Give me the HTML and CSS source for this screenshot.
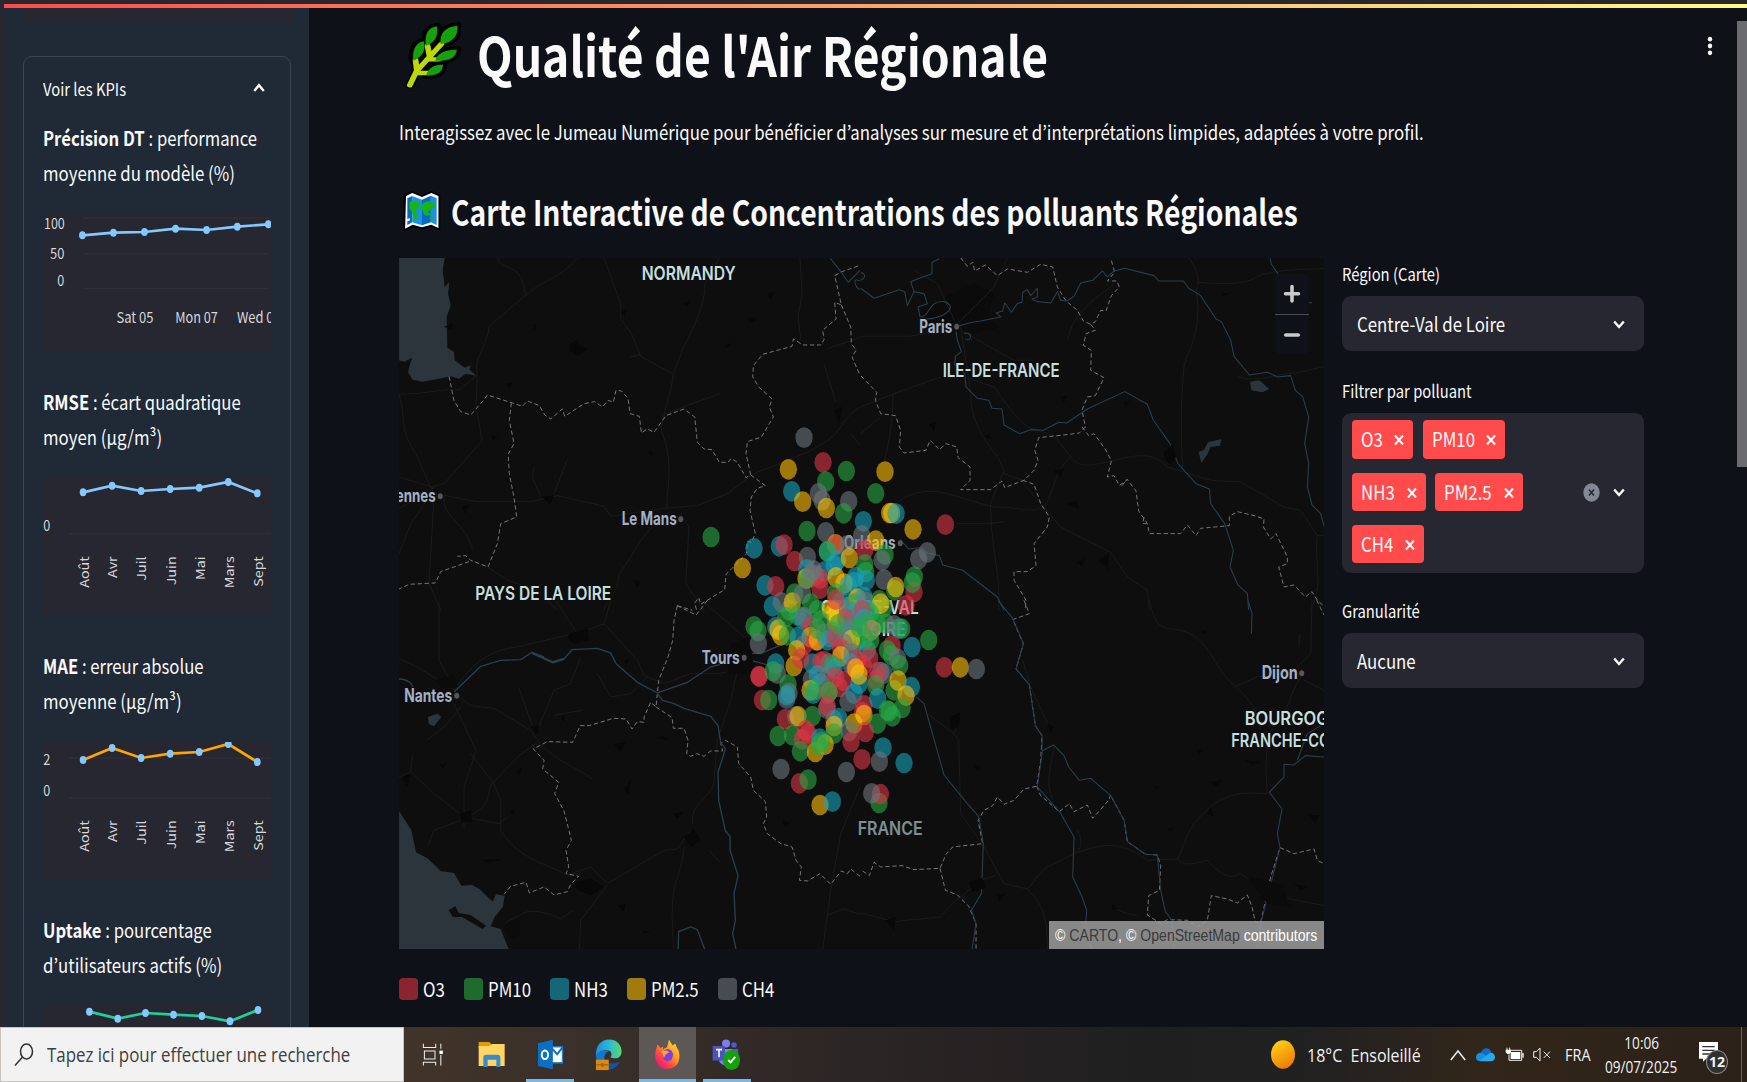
FILE: index.html
```html
<!DOCTYPE html>
<html lang="fr">
<head>
<meta charset="utf-8">
<title>Qualité de l'Air Régionale</title>
<link rel="stylesheet" href="styles.css">
</head>
<body>
<div class="screen">
  <div class="topbar"></div>
  <div class="app">
    <aside class="sidebar">
      <div class="previous-card"></div>
      <section class="expander">
        <header class="expander-head">
          <span class="sq label">Voir les KPIs</span>
          <svg class="chev" viewBox="0 0 14 12"><path d="M2.2 9 7 3.2 11.800 9"/></svg>
        </header>

        <div class="kpi">
          <p><span class="sq"><b>Précision DT</b> : performance</span><br><span class="sq">moyenne du modèle (%)</span></p>
          <svg class="chart" viewBox="130 642 683 414" preserveAspectRatio="none">
            <path class="axis" d="M250 654H807M250 761H807M250 865H807"/>
            <polyline class="line blue" points="248,706 341,698 434,696 527,686 620,690 712,680 805,673"/>
            <g class="pt"><ellipse cx="248" cy="706"/><ellipse cx="341" cy="698"/><ellipse cx="434" cy="696"/><ellipse cx="527" cy="686"/><ellipse cx="620" cy="690"/><ellipse cx="712" cy="680"/><ellipse cx="805" cy="673"/></g>
            <text x="133" y="687" textLength="62" lengthAdjust="spacingAndGlyphs">100</text>
            <text x="151" y="778" textLength="43" lengthAdjust="spacingAndGlyphs">50</text>
            <text x="173" y="857" textLength="21" lengthAdjust="spacingAndGlyphs">0</text>
            <text x="350" y="970" textLength="111" lengthAdjust="spacingAndGlyphs">Sat 05</text>
            <text x="526" y="970" textLength="128" lengthAdjust="spacingAndGlyphs">Mon 07</text>
            <text x="711" y="970" textLength="131" lengthAdjust="spacingAndGlyphs">Wed 09</text>
          </svg>
        </div>

        <div class="kpi">
          <p><span class="sq"><b>RMSE</b> : écart quadratique</span><br><span class="sq">moyen (µg/m³)</span></p>
          <svg class="chart" viewBox="130 354 683 414" preserveAspectRatio="none">
            <path class="axis" d="M208 521H813"/>
            <polyline class="line blue" points="250,397 337,377 424,393 511,387 598,383 685,366 772,400"/>
            <g class="pt"><ellipse cx="250" cy="397"/><ellipse cx="337" cy="377"/><ellipse cx="424" cy="393"/><ellipse cx="511" cy="387"/><ellipse cx="598" cy="383"/><ellipse cx="685" cy="366"/><ellipse cx="772" cy="400"/></g>
            <text x="131" y="514" textLength="21" lengthAdjust="spacingAndGlyphs">0</text>
            <g class="months" transform="translate(0,589)">
              <text transform="translate(267,0) scale(.85,1) rotate(-90)">Août</text><text transform="translate(353,0) scale(.85,1) rotate(-90)">Avr</text><text transform="translate(440,0) scale(.85,1) rotate(-90)">Juil</text><text transform="translate(527,0) scale(.85,1) rotate(-90)">Juin</text><text transform="translate(614,0) scale(.85,1) rotate(-90)">Mai</text><text transform="translate(701,0) scale(.85,1) rotate(-90)">Mars</text><text transform="translate(788,0) scale(.85,1) rotate(-90)">Sept</text>
            </g>
          </svg>
        </div>

        <div class="kpi">
          <p><span class="sq"><b>MAE</b> : erreur absolue</span><br><span class="sq">moyenne (µg/m³)</span></p>
          <svg class="chart" viewBox="130 157 683 414" preserveAspectRatio="none">
            <path class="axis" d="M208 205H813M208 325H813"/>
            <polyline class="line orange" points="250,211 337,175 424,205 511,192 598,187 685,163 772,217"/>
            <g class="pt"><ellipse cx="250" cy="211"/><ellipse cx="337" cy="175"/><ellipse cx="424" cy="205"/><ellipse cx="511" cy="192"/><ellipse cx="598" cy="187"/><ellipse cx="685" cy="163"/><ellipse cx="772" cy="217"/></g>
            <text x="131" y="225" textLength="21" lengthAdjust="spacingAndGlyphs">2</text>
            <text x="131" y="318" textLength="21" lengthAdjust="spacingAndGlyphs">0</text>
            <g class="months" transform="translate(0,392)">
              <text transform="translate(267,0) scale(.85,1) rotate(-90)">Août</text><text transform="translate(353,0) scale(.85,1) rotate(-90)">Avr</text><text transform="translate(440,0) scale(.85,1) rotate(-90)">Juil</text><text transform="translate(527,0) scale(.85,1) rotate(-90)">Juin</text><text transform="translate(614,0) scale(.85,1) rotate(-90)">Mai</text><text transform="translate(701,0) scale(.85,1) rotate(-90)">Mars</text><text transform="translate(788,0) scale(.85,1) rotate(-90)">Sept</text>
            </g>
          </svg>
        </div>

        <div class="kpi">
          <p><span class="sq"><b>Uptake</b> : pourcentage</span><br><span class="sq">d’utilisateurs actifs (%)</span></p>
          <svg class="chart" viewBox="130 947 683 414" preserveAspectRatio="none">
            <polyline class="line green" points="269,964 354,985 437,968 521,973 606,977 690,993 774,959"/>
            <g class="pt"><ellipse cx="269" cy="964"/><ellipse cx="354" cy="985"/><ellipse cx="437" cy="968"/><ellipse cx="521" cy="973"/><ellipse cx="606" cy="977"/><ellipse cx="690" cy="993"/><ellipse cx="774" cy="959"/></g>
          </svg>
        </div>
      </section>
    </aside>

    <main class="main">
      <h1>
        <svg class="leaf" viewBox="0 0 128 210" preserveAspectRatio="none">
          <g stroke="#000" stroke-width="20" stroke-linejoin="round" stroke-linecap="round" fill="#16a00c">
            <path d="M49 72C46 36 54 16 74 13C77 38 73 60 49 72ZM82 66C80 34 92 14 120 11C122 38 112 62 82 66ZM21 116C18 84 26 62 45 58C48 84 44 104 21 116ZM70 116C76 92 92 82 119 83C116 106 104 118 70 116ZM50 158C56 134 72 127 88 128C86 152 72 162 50 160Z"/>
            <path fill="none" d="M13 190 28 148 84 66M28 148 26 118M56 106 54 72"/>
          </g>
          <path fill="none" stroke="#bad80a" stroke-width="13" stroke-linecap="round" stroke-linejoin="round" d="M13 190 28 148 84 66M29 148 26 114M58 106 53 72M52 112H78M28 153H56"/>
          <path fill="#16a00c" d="M49 72C46 36 54 16 74 13C77 38 73 60 49 72ZM82 66C80 34 92 14 120 11C122 38 112 62 82 66ZM21 116C18 84 26 62 45 58C48 84 44 104 21 116ZM70 116C76 92 92 82 119 83C116 106 104 118 70 116ZM50 158C56 134 72 127 88 128C86 152 72 162 50 160Z"/>
        </svg>
        <span class="sq">Qualité de l'Air Régionale</span>
      </h1>
      <p class="intro"><span class="sq">Interagissez avec le Jumeau Numérique pour bénéficier d’analyses sur mesure et d’interprétations limpides, adaptées à votre profil.</span></p>
      <h2>
        <svg class="mapicon" viewBox="0 0 90 126" preserveAspectRatio="none">
          <path fill="#000" d="M4 16 22 4 45 16 66 3 86 14V122L66 110 45 118 24 110 3 124Z"/>
          <path fill="#fff" d="M9 18 23 9 45 21 66 9 82 18V114L66 104 45 112 24 104 7 116Z"/>
          <path fill="#0669c4" d="M12 25 23 18V97L12 105ZM45 29 65 17V97L45 106Z"/>
          <path fill="#1b8fea" d="M23 18 45 29V106L23 97ZM65 17 78 25V105L65 97Z"/>
          <path fill="#16b616" d="M17 36 26 31 40 37 38 50 30 62 36 72 34 86 27 88 26 74 17 56ZM48 38 62 32 66 40V60L60 62 58 78 50 74 46 60 40 58ZM66 34 75 42 72 54 66 58ZM59 70H64V76H59ZM62 80H70V86H62Z"/>
          <path fill="#fff" d="M11 88 18 84 17 92 11 94Z"/>
        </svg>
        <span class="sq">Carte Interactive de Concentrations des polluants Régionales</span>
      </h2>

      <div class="columns">
        <div class="map-col">
          <div class="map">
            <svg class="map-svg" viewBox="398.300 257.700 925.500 691.300">
              <g transform="translate(390,250) scale(.33333)">
                <path class="water" d="M25 23H162L156 60 162 110 176 95 172 130 180 165 168 200 170 292 190 305 192 330 222 352 240 345 236 358 257 376 225 370 205 385 180 378 140 386 95 394 66 388 52 366 56 348 64 322 42 334 25 330Z"/>
                <path class="road" d="M320 23C330 60 370 40 392 84L406 134M560 23C500 90 470 80 406 134 350 180 330 200 296 226 290 280 260 310 258 350 262 430 250 460 262 500L274 572M25 432C120 430 150 415 205 418L257 376M640 23 690 160V205L722 250 750 318 848 372 875 300 905 240C930 180 944 140 942 104L985 23M848 372C840 440 820 470 812 540 850 640 830 700 828 770M25 430C50 530 20 520 80 620L120 712M274 572 160 700 120 712M160 735 260 754H420L500 736 640 768 660 798 820 774 920 766 1010 730 1090 670 1250 606C1380 540 1330 520 1408 470M430 650 425 680 448 735M530 628 490 730M25 775 60 755 130 712 25 680M160 735C150 800 230 820 245 900M120 735 60 820 25 910M130 735 115 1000 150 1080M870 790 895 830 885 1000 940 1080M830 790C740 860 740 900 685 970 680 1040 650 1040 640 1080M1228 23 1234 130 1222 200 1230 268M1300 340 1335 455M820 494 890 465 990 430M716 320 748 314M1310 295 1408 262M1380 550 1408 585M290 950 350 990 440 1020 500 1080"/>
                <path class="border" d="M175 378 190 452 210 484 240 494 280 448 290 434 365 458 395 468 410 452 446 466 462 494 480 506 515 476 522 498 580 460 612 454 635 470 652 450 668 456 676 420 692 422 712 444 718 490 746 498 752 548 770 536 790 546 826 496 880 476 912 500 920 576 940 596 964 598 986 636H1012L1022 624 1040 636 1066 682 1080 674 1124 706 1100 714 1082 740 1078 780 1094 850 1082 876 1070 874 1068 910 1006 972 1002 1018 930 1062 924 1042 912 1058 918 1080M860 1066 905 1080M362 458 356 510 370 580 352 612 356 670 370 742 378 800 330 820 320 880 292 950 240 930 224 916 200 918M235 934 150 964 134 998 56 1002 25 1016M1080 674 1066 610 1070 574 1112 560 1148 500 1136 470 1144 446 1104 410 1086 380 1088 346 1116 312 1204 288 1208 266 1236 284H1290L1300 268 1296 240 1336 206 1332 156 1352 164 1332 76 1354 64 1408 45M1352 164 1380 230 1382 280 1396 300 1384 320 1408 375"/>
                <path class="river" d="M1318 23 1352 66 1372 96 1408 60M1408 92C1380 80 1396 112 1408 118"/>
                <path class="patch" d="M540 280 560 268 572 292 592 294 562 318 536 300ZM160 230 186 218 184 236ZM690 186 708 176 702 196ZM1074 202 1096 210 1080 218ZM345 400 366 396 356 414ZM300 552 320 560 308 572ZM455 740 488 735 480 765ZM725 990 750 992 742 1012ZM880 160 900 152 890 166ZM1330 478 1354 470 1345 520ZM215 768 236 762 222 790ZM425 225 438 222 432 240ZM1130 130 1150 124 1140 144ZM776 600 792 610 780 620ZM1000 285 1026 278 1010 292Z"/>
              </g>
              <g transform="translate(860,250) scale(.33333)">
                <path class="patch faint" d="M230 150 340 100 400 130 380 200 420 230 340 250 230 230 170 200Z"/>
                <path class="road" d="M0 258H150L280 230 400 110 440 23M290 230 230 100 160 60M300 230 330 430C330 560 420 600 430 670L486 690M300 240 370 280 460 330H520M310 380 400 410 450 480 500 530 580 556 630 620C660 660 700 640 750 634 860 600 890 620 920 650L1050 690 1140 695 1270 770 1320 780 1370 856H1390M430 660 390 760C390 900 420 960 414 1080M480 690 600 830 750 906 800 980 860 1020 866 1080M630 620C580 660 580 730 550 770 510 790 480 770 400 770 280 740 260 720 190 724 140 730 120 750 90 770M985 23C1010 60 1020 90 1006 120 1030 250 970 320 970 350 960 450 960 560 966 650M1010 96C1120 104 1160 100 1200 74 1300 50 1350 60 1390 54M1130 380C1200 400 1260 366 1300 368 1350 360 1370 352 1390 350M0 470 100 430 240 380M96 430C100 500 80 600 72 630M0 550 60 500M290 820H380L432 814M1370 860C1360 940 1390 1000 1350 1080M620 270C640 180 700 150 760 100"/>
                <path class="border" d="M300 23 320 48 336 36 342 62 374 44 410 76 440 56 500 66 540 42 576 50 590 110 616 152 650 180 668 212 690 222 704 214 720 180 736 182 752 136 776 110 768 92 740 92 762 66 750 23M690 222 704 240 676 250 668 285 692 300 690 360 730 382 704 436 680 440 664 480 674 530 656 548 610 554 534 562 522 600 532 630 520 660 490 690 432 712 424 692 390 718 300 718 328 690V650L292 622 288 590 256 580 236 598 208 570 196 600 130 608 116 590 120 540 104 496 60 490 44 450 48 426 0 376M664 530 684 556 700 550 736 600 752 632 740 680 760 676 776 706 800 688 826 722 834 782 860 820 866 850H960L980 824 1006 856 1020 834 1106 826V798L1130 784 1180 796 1210 806 1208 830 1230 866 1246 850 1280 920V940L1254 950 1270 1010 1300 1004 1334 1040 1354 1024 1370 1050 1390 1068M486 690 520 702 540 760 566 800 560 830 520 880 526 946 500 964H460V990L496 1050 494 1080M784 706 800 686M850 800 846 820 868 820"/>
                <path class="river" d="M0 114 40 144 116 118 132 124 140 166 160 124 190 130 200 160 172 170 178 200C210 200 200 150 250 154 300 170 240 210 190 206M235 26 214 36V70L176 84 150 94 160 124M0 90C20 80 10 66 0 68M286 230C320 220 330 214 360 212L420 200 406 188 426 182 432 158 452 186 470 160 484 156 486 126 500 118 510 136 530 114V140L514 146 530 154 570 158 590 124 600 150 618 152 640 138 660 98 696 90 726 62 740 80 760 62 792 54 880 76 894 92 968 92 984 114 1020 136 1066 206 1082 214 1110 270 1120 318 1166 374 1220 366 1250 380 1290 376 1304 420 1326 440 1344 500 1332 580 1344 640 1340 710 1354 764 1380 790 1390 828M286 244 290 270 302 304 284 318 282 344 312 370 316 410 350 444 384 450 394 474 424 476 430 524 476 550 510 538 548 540 594 516 618 518 680 476 792 424 860 462 878 510 928 580 952 640 1006 700 1046 716 1050 760 1092 820 1118 900 1108 950 1132 1004 1160 1030 1164 1080M310 250C340 240 330 280 314 266M1228 24 1232 42 1252 70M1345 157H1354M118 868 144 896 180 892 200 908 236 916 246 944 306 960 410 1040 430 1080"/>
                <path class="water" d="M1168 394 1196 390 1226 416 1205 426 1172 420ZM1014 606 1030 598 1042 576 1082 566 1078 586 1050 590 1040 612 1022 638Z"/>
                <path class="patch" d="M910 606 936 580 946 620 930 644 912 626ZM580 660 610 656 600 680ZM620 760 650 750 655 775ZM650 935 672 925 665 950ZM600 440 620 435 610 456ZM715 930 745 905 742 960ZM370 560 385 550 395 566ZM1080 130 1115 126 1090 136ZM790 455 806 452 796 472ZM205 520 225 515 220 545Z"/>
              </g>
              <g transform="translate(390,600) scale(.33333)">
                <path class="water" d="M25 632 62 690 76 756 110 774 150 812 190 818 212 856 244 854 266 866 306 904 316 882 342 886 336 920 312 950 300 978 330 986 354 1047H25ZM112 350 140 340 152 350 130 378 114 370Z"/>
                <path class="land" d="M174 930 194 918 204 938 240 944 286 976 276 986 214 950 186 950Z"/>
                <path class="road" d="M145 0V180L190 260M25 175 80 200 190 270M190 270C250 180 300 150 380 140L540 102M495 0 560 100 640 70 660 0M640 70 740 180 760 225 820 250 900 220 980 220 1080 205M205 290 240 316 310 324 420 390 434 410C480 480 560 500 604 536M385 265 430 390M190 310 256 450 220 560V680M240 460 310 550 330 600V690C380 770 440 780 530 824M434 430 380 470 300 555C290 600 290 620 230 650M25 530 60 515 130 580 220 650 325 670 350 650M60 515 66 465M110 740 130 690 210 660M530 824 600 800 650 850 820 750 860 746 900 690M650 855 570 960 566 1047M880 740C870 850 830 830 850 1047M905 670C900 600 970 590 970 540L980 420 1020 300 1040 210M570 170 540 250 490 270 440 390M620 220 660 290 720 280 770 230M345 966 410 934C460 930 500 950 510 955L548 930M110 420 170 370 210 320M490 345 575 330M1408 560 1350 700 1320 870 1296 1047M1310 944 1360 926 1408 942M935 0 1060 110 1120 110M955 750 986 784"/>
                <path class="border" d="M860 16 888 30 916 44 926 32 950 0M860 16 850 60 846 120 832 170 804 240 796 320 780 306 760 350V366L740 364 724 386 706 356 668 354 596 376 568 376 556 404 546 426 470 424 428 446 460 480 456 506 504 546 492 580 520 632 532 680 542 720 526 750 534 800 526 820 564 828 540 852 530 874 490 884 460 860 416 878 406 846 360 858 340 882M796 320 844 352 848 384 880 384 892 420 888 460 900 468 918 460 940 468 960 452H996L990 430 1004 420 1040 440 1044 490 1080 530 1088 570 1124 604 1128 650 1118 670 1130 700 1170 730 1204 740 1216 780 1232 800 1226 840 1250 842 1288 820 1320 852 1352 812 1370 820 1380 806 1408 828"/>
                <path class="river thick" d="M190 275 220 246 270 198 330 180 390 178 424 156 460 170"/>
                <path class="river widest" d="M424 158 486 186 520 176"/>
                <path class="river thick" d="M520 176 544 148 620 144 660 158 676 190 740 246 800 278 890 246 960 200 1060 174M1060 158 1110 160 1166 136M800 280 816 300 850 310 880 324 960 348 982 376 990 426 1004 446 982 516 984 600 1004 692 1018 708 1018 750 1042 826 1030 880 1034 960 1026 1000 1036 1047M25 236C50 236 66 250 68 268M862 1047 864 994 900 980 920 988 942 1047M1070 178 1140 196"/>
                <path class="patch" d="M535 100 590 85 596 120 550 130 530 115ZM205 640 240 630 245 665 215 665ZM420 378 445 375 440 405ZM880 710 910 685 930 720 900 740ZM550 845 600 835 640 860 600 885 560 870ZM670 430 704 425 690 458ZM35 530 60 520 50 560ZM700 570 722 535 712 580ZM680 915 705 910 700 935ZM270 778 330 776 300 788ZM510 350 520 345 525 370ZM845 640 880 635 860 655ZM1175 660 1200 668 1180 675ZM755 990 778 996 762 1000ZM375 510 395 505 385 525ZM358 630 375 628 366 645ZM790 412 815 405 830 420ZM700 180 715 178 705 196ZM145 490 168 490 156 505Z"/>
                <path class="patch faint" d="M130 240 190 225 200 260 160 268ZM340 980 390 950 385 1010 360 1015ZM1020 130 1080 110 1090 220 1010 220Z"/>
              </g>
              <g transform="translate(860,600) scale(.33333)">
                <path class="road" d="M866 0C880 60 890 86 940 86 1040 100 1050 180 1090 220 1110 260 1190 290 1200 390M1120 260 1190 230 1300 210 1350 160 1354 0M1318 100 1314 140M1330 240 1390 270M1320 230C1280 290 1290 330 1240 380 1220 400 1210 480 1220 580 1100 570 1060 600 1000 670 970 720 970 740 950 776L860 780C790 730 750 720 640 760L560 800C520 830 520 850 500 866L430 850 370 740 300 640 294 420 280 400 200 340M500 866C550 920 560 950 560 1047M0 938 100 964 240 950C280 900 290 900 360 840L404 826M950 776C970 800 1000 790 1040 780 1080 820 1100 840 1140 820L1240 886 1390 916M486 180 510 260 570 390M580 440C560 540 560 560 576 600M650 690C670 730 660 750 640 755M750 920 800 940 830 945M280 400 300 340"/>
                <path class="border" d="M490 0 506 40 456 58 488 130 466 206 506 254 524 376 544 406 540 480 528 558 490 566 460 600 430 612 410 590 396 616 370 630 352 660 366 730 276 740 256 762 238 804 160 808 124 796 60 800 40 786 26 826 0 808M238 804 254 870 290 884 324 918 346 970V1047M528 558 540 586 596 634 626 610 640 634 680 614 696 654 744 600 750 584 790 660 800 724 854 762 890 764 900 796 896 870 864 886 860 944 900 970 920 958 980 960 1010 980 1040 960 1052 886 1100 896 1130 908 1160 884 1174 920 1184 966H1200L1230 830 1258 742 1300 760 1360 746 1370 780 1390 790M1368 0 1390 44"/>
                <path class="river" d="M412 0 456 54 488 130 466 206 506 254 524 376 544 406V460L530 560 598 636 640 710 636 830 664 890 678 930 674 990 692 1047M544 452 578 434 610 466 624 500 656 540 690 534 750 586 790 660 800 724 854 762 890 764 900 870 914 934 934 960 940 1040M166 290 190 310 250 524 320 610 354 648 368 730 362 880 332 930 346 970 334 1047M1162 0 1174 40 1172 100M1390 470 1334 466 1300 494 1270 492V530L1226 576 1264 626 1250 700 1258 742 1200 970 1190 1040M1310 480 1340 400 1390 370"/>
                <path class="patch" d="M266 350 300 335 295 380 272 385ZM325 844 365 832 374 864 334 874ZM1050 545 1082 540 1068 562ZM1345 645 1376 644 1364 672ZM75 960 105 950 100 990ZM410 885 435 880 415 905ZM760 910 770 930 750 925ZM1040 640 1050 620 1060 650ZM1300 850 1340 860 1320 870ZM1150 480 1195 485 1175 492ZM560 370 580 380 570 400ZM920 685 940 684 928 695ZM340 495 358 500 350 508ZM1010 450 1025 452 1014 460ZM1020 90 1040 95 1028 102ZM880 558 896 560 888 566Z"/>
                <path class="patch faint" d="M1160 830 1210 840 1260 850 1290 920 1220 910Z"/>
              </g>
              <g class="places">
                <g class="region">
                  <text x="641" y="279.800" textLength="94" lengthAdjust="spacingAndGlyphs">NORMANDY</text>
                  <text x="942" y="376.800" textLength="117" lengthAdjust="spacingAndGlyphs">ILE-DE-FRANCE</text>
                  <text x="474.500" y="599.800" textLength="136" lengthAdjust="spacingAndGlyphs">PAYS DE LA LOIRE</text>
                  <text x="820" y="613.500" textLength="98" lengthAdjust="spacingAndGlyphs">CENTRE-VAL</text>
                  <text x="836" y="635.500" textLength="69" lengthAdjust="spacingAndGlyphs">DE LOIRE</text>
                  <text x="1244" y="724.500" textLength="114" lengthAdjust="spacingAndGlyphs">BOURGOGNE-</text>
                  <text x="1230.500" y="746.500" textLength="131" lengthAdjust="spacingAndGlyphs">FRANCHE-COMTÉ</text>
                  <text class="country" x="857" y="834.500" textLength="65" lengthAdjust="spacingAndGlyphs">FRANCE</text>
                </g>
                <g class="city">
                  <text x="918.500" y="332.500" textLength="33" lengthAdjust="spacingAndGlyphs">Paris</text><ellipse cx="956" cy="326.500" rx="2.500" ry="3"/>
                  <text x="386.500" y="502" textLength="48.500" lengthAdjust="spacingAndGlyphs">Rennes</text><ellipse cx="439.500" cy="496" rx="2.500" ry="3"/>
                  <text x="621" y="525" textLength="55" lengthAdjust="spacingAndGlyphs">Le Mans</text><ellipse cx="680" cy="519" rx="2.500" ry="3"/>
                  <text x="843" y="548.500" textLength="52" lengthAdjust="spacingAndGlyphs">Orléans</text><ellipse cx="899.500" cy="543" rx="2.500" ry="3"/>
                  <text x="701" y="663.500" textLength="38" lengthAdjust="spacingAndGlyphs">Tours</text><ellipse cx="743.500" cy="657.500" rx="2.500" ry="3"/>
                  <text x="403.500" y="701.500" textLength="48" lengthAdjust="spacingAndGlyphs">Nantes</text><ellipse cx="456" cy="695.500" rx="2.500" ry="3"/>
                  <text x="1261" y="679" textLength="36" lengthAdjust="spacingAndGlyphs">Dijon</text><ellipse cx="1301" cy="673" rx="2.500" ry="3"/>
                </g>
              </g>
              <g id="stations" transform="translate(720,410) scale(.33333)"></g>
            </svg>
            <div class="zoomctl">
              <svg viewBox="0 0 34 40"><path d="M10.500 19.700H23.500M17 12.500V27"/></svg>
              <svg viewBox="0 0 34 40"><path d="M10.500 20.500H23.500"/></svg>
            </div>
            <div class="attrib"><span class="sq">© <a>CARTO</a>, © <a>OpenStreetMap</a> contributors</span></div>
          </div>
          <div class="legend">
            <div style="width:65px"><i class="o3"></i><span class="sq">O3</span></div>
            <div style="width:86.500px"><i class="pm10"></i><span class="sq">PM10</span></div>
            <div style="width:77px"><i class="nh3"></i><span class="sq">NH3</span></div>
            <div style="width:91px"><i class="pm25"></i><span class="sq">PM2.5</span></div>
            <div style="width:70px"><i class="ch4"></i><span class="sq">CH4</span></div>
          </div>
        </div>

        <form class="filters">
          <label><span class="sq label">Région (Carte)</span></label>
          <div class="select"><span class="sq">Centre-Val de Loire</span><svg class="chev" viewBox="0 0 14 12"><path d="M2.200 3.500 7 9 11.800 3.500"/></svg></div>
          <label><span class="sq label">Filtrer par polluant</span></label>
          <div class="multi">
            <div class="tags">
              <div class="tag" style="width:61px"><span class="sq">O3</span><svg viewBox="0 0 10 12"><path d="M1 1.500 9 10.500M9 1.500 1 10.500"/></svg></div>
              <div class="tag" style="width:82.500px"><span class="sq">PM10</span><svg viewBox="0 0 10 12"><path d="M1 1.500 9 10.500M9 1.500 1 10.500"/></svg></div>
              <div class="tag" style="width:73.500px"><span class="sq">NH3</span><svg viewBox="0 0 10 12"><path d="M1 1.500 9 10.500M9 1.500 1 10.500"/></svg></div>
              <div class="tag" style="width:87.500px"><span class="sq">PM2.5</span><svg viewBox="0 0 10 12"><path d="M1 1.500 9 10.500M9 1.500 1 10.500"/></svg></div>
              <div class="tag" style="width:71.500px"><span class="sq">CH4</span><svg viewBox="0 0 10 12"><path d="M1 1.500 9 10.500M9 1.500 1 10.500"/></svg></div>
            </div>
            <svg class="clear" viewBox="0 0 17 19"><ellipse cx="8.500" cy="9.500" rx="8.200" ry="9.200"/><path d="M6 6.500 11 12.500M11 6.500 6 12.500"/></svg>
            <svg class="chev" viewBox="0 0 14 12"><path d="M2.200 3.500 7 9 11.800 3.500"/></svg>
          </div>
          <label><span class="sq label">Granularité</span></label>
          <div class="select"><span class="sq">Aucune</span><svg class="chev" viewBox="0 0 14 12"><path d="M2.200 3.500 7 9 11.800 3.500"/></svg></div>
        </form>
      </div>
      <svg class="kebab" viewBox="0 0 6 20"><ellipse cx="3" cy="3.200" rx="2.200" ry="2.400"/><ellipse cx="3" cy="10" rx="2.200" ry="2.400"/><ellipse cx="3" cy="16.800" rx="2.200" ry="2.400"/></svg>
      <div class="scroll"></div>
    </main>
  </div>

  <footer class="taskbar">
    <div class="search">
      <svg viewBox="0 0 20 24"><ellipse cx="12.500" cy="8.500" rx="6" ry="7.500"/><path d="M8.500 14 1 22.500"/></svg>
      <span>Tapez ici pour effectuer une recherche</span>
    </div>
    <div class="apps">
      <div><svg viewBox="96 64 66 76"><g fill="none" stroke="#eee" stroke-width="3"><path d="M100 69V80H136V69M103 90H134V114H103ZM100 133V123H136V133M151 69V84M151 102V133"/></g><path fill="#fff" d="M147 89H157V99H147Z"/></svg></div>
      <div><svg viewBox="266 58 84 90"><path fill="#e09a0c" d="M268 64H300L306 70V82H268Z"/><path fill="#ffd660" d="M268 76H300L308 70H346V136H268Z"/><path fill="#3a8ad0" d="M282 139V110Q282 102 290 102H325Q333 102 333 110V139H321V117H295V139Z"/></svg></div>
      <div class="open"><svg viewBox="440 52 84 100"><path fill="#fff" stroke="#1e88e0" stroke-width="4" d="M484 79H517V127H484Z"/><path fill="none" stroke="#0b72c4" stroke-width="6" d="M486 84 501 101 518 80"/><path fill="#0b6fc4" d="M443 68 488 57V147L443 137Z"/><ellipse cx="464" cy="103" rx="9.500" ry="13" fill="none" stroke="#fff" stroke-width="6"/></svg></div>
      <div><svg viewBox="612 48 90 108"><defs><linearGradient id="eg"><stop offset="0" stop-color="#1b8be0"/><stop offset=".5" stop-color="#2bb7d8"/><stop offset="1" stop-color="#5bdb62"/></linearGradient></defs><path fill="#0d54a4" d="M640 100C640 130 665 138 694 125 684 146 664 154 650 153L626 130Z"/><path fill="url(#eg)" d="M615 110C612 72 634 53 658 53 686 53 700 74 699 94 698 114 680 118 662 112 668 106 668 94 658 90 640 84 622 92 615 110Z"/><path fill="#1277d0" d="M615 112C620 90 642 84 656 92 646 96 640 106 644 122L618 128Z"/><path fill="#d98a12" d="M615 119H657V153H615Z"/><path fill="#a85f06" d="M615 134H657V138H615ZM632 131H640V142H632Z"/></svg></div>
      <div class="open active"><svg viewBox="788 48 86 106"><defs><linearGradient id="ff" x1="1" y1="0" x2=".2" y2="1"><stop offset="0" stop-color="#ffe640"/><stop offset=".45" stop-color="#ff9a20"/><stop offset=".75" stop-color="#ff3e48"/><stop offset="1" stop-color="#e31587"/></linearGradient></defs><path fill="url(#ff)" d="M800 68 808 80 818 76 816 84 830 78 836 54 848 72 856 66 862 80C872 90 872 116 864 130 852 150 816 154 802 136 788 120 790 90 800 68Z"/><ellipse cx="832" cy="103" rx="17" ry="20" fill="#7a3fe0"/><path fill="#ffa42a" d="M812 90 828 88 838 94 826 100 820 112Z"/></svg></div>
      <div class="open"><svg viewBox="962 54 94 108"><circle cx="1008" cy="72" r="13" fill="#7b83eb"/><circle cx="1034" cy="77" r="9" fill="#5059c9"/><path fill="#5059c9" d="M1020 90H1048V120H1020Z"/><path fill="#7b83eb" d="M986 90H1028V130Q1008 158 986 132Z"/><path fill="#4b53bc" d="M964 80H1004V128H964Z"/><path stroke="#fff" stroke-width="5" d="M975 92H995M985 92V117"/><ellipse cx="1026" cy="126" rx="28" ry="33" fill="#13a10e"/><path fill="none" stroke="#fff" stroke-width="6" d="M1015 126 1023 134 1038 116"/></svg></div>
    </div>
    <div class="tray">
      <svg class="sun" viewBox="0 0 24 29"><defs><linearGradient id="sg" x1=".2" y1="0" x2=".7" y2="1"><stop offset="0" stop-color="#ffd21a"/><stop offset="1" stop-color="#f07800"/></linearGradient></defs><ellipse cx="12" cy="14.500" rx="12" ry="14.300" fill="url(#sg)"/></svg>
      <span class="temp">18°C&nbsp; Ensoleillé</span>
      <svg class="up" viewBox="0 0 16 12"><path d="M.8 11 8 2 15.200 11"/></svg>
      <svg class="cloud" viewBox="0 0 57 45"><path fill="#0f6cc8" d="M14 22C14 4 40 -6 46 16L30 34Z"/><path fill="#1490df" d="M0 32C0 18 14 14 22 20L50 42H12C4 42 0 38 0 32Z"/><path fill="#28a8ea" d="M10 42 38 20C50 12 57 24 57 31 57 38 52 43 46 43H12Z"/></svg>
      <svg class="batt" viewBox="0 0 57 45"><path fill="none" stroke="#eee" stroke-width="3" d="M14 10H50V40H12V22M6 2V10M14 2V10"/><path fill="#fff" d="M2 8H18V16L13 21H7L2 16ZM17 15H46V36H17ZM52 18H56V32H52Z"/></svg>
      <svg class="vol" viewBox="0 0 54 45"><path fill="none" stroke="#eee" stroke-width="3" d="M2 14H10L21 3V42L10 31H2ZM32 14 51 33M51 14 32 33"/></svg>
      <span class="lang">FRA</span>
      <div class="clock"><span>10:06</span><span>09/07/2025</span></div>
      <div class="notif"><svg viewBox="0 0 57 60"><path fill="#fff" d="M0 0H57V50H22L12 59V50H0Z"/><path stroke="#333" stroke-width="4" d="M10 14H47M10 25H47M10 36H36"/></svg><b>12</b></div>
      <div class="peek"></div>
    </div>
  </footer>
</div>
<script src="stations.js"></script>
</body>
</html>
```

FILE: styles.css
```css
* { box-sizing: border-box; }
body { margin: 0; background: #0e1117; overflow: hidden; }
.screen { width: 1747px; height: 1082px; display: flex; flex-direction: column; overflow: hidden; background: #28262f;
  font-family: "Noto Sans CJK JP", "Noto Sans", sans-serif; font-size: 19.800px; color: #fafafa; }
svg { display: block; flex: none; }
.topbar { flex: none; height: 8px; border-top: 4px solid #28272f; background: linear-gradient(90deg, #ff4b4b, #fffd80); margin-left: 4px; }
.app { flex: none; height: 1019px; display: flex; padding-left: 4px; overflow: hidden; }

/* condensed text run */
.sq { display: inline-block; white-space: nowrap; transform: scaleX(var(--sx, .85)); transform-origin: 0 50%; }
.label { font-size: 17.500px; --sx: .845; }

.sidebar { flex: none; width: 305px; height: 1019px; overflow: hidden; background: #202936; padding: 0 18.500px 0 19px; }
.previous-card { height: 15px; background: #262730; margin-bottom: 33px; }
.expander { border: 1px solid #3d4552; border-radius: 9px; height: 1200px; padding: 0 19px; }
.expander-head { height: 63px; display: flex; align-items: center; justify-content: space-between; padding-right: 5px; }
.expander-head .chev { margin-top: -2px; }
.chev { width: 14px; height: 12px; fill: none; stroke: #fafafa; stroke-width: 2.400; }
.kpi { height: 264px; --sx: .843; }
.kpi p { margin: 0 0 24px; line-height: 35px; height: 70px; white-space: nowrap; width: 228px; }
.kpi .sq { vertical-align: top; }
.kpi br + .sq { --sx: .85; }
.chart { width: 228px; height: 138px; background: #262730; overflow: hidden; }
.chart text { font-size: 45px; fill: #d6d7dc; }
.chart .months text { font-size: 43px; text-anchor: end; }
.axis { stroke: #31333d; stroke-width: 3; }
.line { fill: none; stroke-width: 8; }
.blue { stroke: #83c9ff; } .orange { stroke: #ffa500; } .green { stroke: #1fd09a; }
.pt ellipse { rx: 10px; ry: 12px; fill: #83c9ff; }

.main { flex: 1; position: relative; background: #0e1117; padding-left: 89.500px; }
h1, h2, p { margin: 0; }
h1 { height: 97px; display: flex; align-items: center; gap: 16px; padding-left: 5px; font-size: 54.500px; line-height: 80px; font-weight: 700; --sx: .849; }
h1 .sq { margin-top: -5px; }
.leaf { width: 57px; height: 70px; margin-top: 1px; }
.intro { height: 50px; line-height: 52px; margin-top: 1px; }
h2 { height: 101.700px; display: flex; align-items: center; gap: 9px; padding: 8px 0 0 3px; font-size: 35px; line-height: 52px; font-weight: 700; --sx: .809; }
h2 .sq { margin-top: 1px; }
.mapicon { width: 40px; height: 42px; margin-top: 1px; }
.columns { display: flex; gap: 17.500px; }
.map-col { width: 925.500px; }
.map { position: relative; width: 925.500px; height: 691.300px; background: #0e0e0e; overflow: hidden; }
.map-svg { width: 100%; height: 100%; }
.water { fill: #2c353c; } .land { fill: #0e0e0e; } .patch { fill: #080808; } .faint { fill: #0b0b0b; }
.road { fill: none; stroke: #1b1b1b; stroke-width: 3; }
.border { fill: none; stroke: #77747c; stroke-width: 3; stroke-dasharray: 13 8; stroke-linejoin: round; }
.river { fill: none; stroke: #2a3f4d; stroke-width: 3.200; stroke-linejoin: round; }
.thick { stroke-width: 4; } .widest { stroke-width: 7; }
.places text { font-family: Inter, "Noto Sans", sans-serif; paint-order: stroke; stroke: #0e0e0e; stroke-width: 2px; }
.region text { font-size: 18.500px; font-weight: 600; fill: #c5dfdf; }
.region .country { fill: #7f9095; }
.city text { font-size: 18.500px; font-weight: 700; fill: #a3b1c6; }
.city ellipse { fill: #55565a; }
.o3 { fill: #dc3545; background: #8a2530; } .pm10 { fill: #28a745; background: #1e6a2f; } .nh3 { fill: #17a2b8; background: #146776; }
.pm25 { fill: #ffc107; background: #a17c0d; } .ch4 { fill: #6c757d; background: #474c52; }
#stations ellipse { rx: 26px; ry: 31px; fill-opacity: .6; }
.zoomctl { position: absolute; right: 15px; top: 16px; width: 34px; height: 80px; border-radius: 4px; background: #0e1117; overflow: hidden; }
.zoomctl svg { width: 34px; height: 40px; fill: none; stroke: #c9cacc; stroke-width: 3.600; stroke-linecap: round; }
.zoomctl svg + svg { border-top: 1px solid #4a4c50; }
.attrib { position: absolute; right: 0; bottom: 0; width: 275px; height: 28px; line-height: 28px; padding-left: 6px; background: rgba(160,160,160,.84); color: #fff;
  font-family: "Liberation Sans", Arial, sans-serif; font-size: 16.500px; --sx: .854; }
.attrib a { color: #3a3a3c; }
.legend { display: flex; height: 80px; align-items: center; }
.legend div { display: flex; align-items: center; gap: 5px; }
.legend i { flex: none; width: 19px; height: 22px; border-radius: 4px; }

.filters { width: 302px; margin-top: 3px; }
.filters label { display: flex; align-items: center; height: 35.500px; padding-bottom: 9px; }
.select { height: 55px; border-radius: 9px; background: #262730; display: flex; align-items: center; justify-content: space-between; padding: 0 17.500px 0 15px; margin-bottom: 26px; }
.select .sq { margin-top: -1px; }
.multi { height: 160px; border-radius: 9px; background: #262730; display: flex; align-items: center; padding: 0 17.500px 0 10.500px; margin-bottom: 25px; }
.tags { width: 225px; display: flex; flex-wrap: wrap; gap: 14px 9.500px; margin: -2px 6px 0 0; }
.tag { height: 38.300px; border-radius: 4px; background: #ff4b4b; display: flex; align-items: center; justify-content: space-between; padding: 0 9px; }
.tag .sq { width: 20px; margin-top: -1px; }
.tag svg { width: 10px; height: 12px; stroke: #fff; stroke-width: 1.900; margin-top: 2px; }
.clear { width: 17px; height: 19px; margin: -1px auto 0 0; fill: #848795; stroke: #262730; stroke-width: 1.500; }
.clear ellipse { stroke: none; }
.multi > .chev { margin-top: -2px; }
.kebab { position: absolute; right: 34px; top: 28px; width: 6px; height: 20px; fill: #fafafa; }
.scroll { position: absolute; right: 0; top: 13px; width: 10px; height: 446px; background: #6b6c6f; }

.taskbar { flex: none; height: 55px; display: flex; color: #f2f2f2; font-family: "Open Sans", "Noto Sans", sans-serif;
  background: linear-gradient(90deg, #40342a 400px, #382e29 640px, #2c2525 850px, #1f1f20 1150px, #222120 1330px, #32261a 1480px, #2b2119 1747px); }
.search { width: 404px; background: #f2f2f2; border: 1px solid #c9c4bf; color: #3f3f3f; display: flex; align-items: center; gap: 12.500px; padding-left: 13px; font-size: 19.500px; white-space: nowrap; }
.search svg { width: 20px; height: 24px; fill: none; stroke: #333; stroke-width: 1.500; }
.search span { transform: scaleX(.866); transform-origin: 0 50%; margin-top: -1px; }
.apps { display: flex; gap: 1.500px; padding-left: .5px; }
.apps div { width: 57.200px; display: flex; align-items: center; justify-content: center; }
.apps svg { height: 33px; }
.apps div:first-child svg { height: 26px; }
.apps div:nth-child(2) svg { height: 30px; }
.open { background: linear-gradient(#76b9ed, #76b9ed) 50% 100%/48px 3px no-repeat; }
.open.active { background: linear-gradient(#76b9ed, #76b9ed) 50% 100%/57px 3px no-repeat, #5d5755; }
.tray { margin-left: auto; width: 476px; display: flex; align-items: center; white-space: nowrap; font-size: 18.500px; }
.tray span { transform: scaleX(.85); transform-origin: 0 50%; }
.sun { width: 24px; height: 29px; margin-right: 12px; }
.tray .temp { width: 143px; transform: scaleX(.865); }
.up { width: 16px; height: 12px; fill: none; stroke: #eee; stroke-width: 1.500; margin-right: 10px; }
.cloud, .batt { width: 19px; height: 15px; margin-right: 10px; }
.batt { margin-right: 9px; }
.vol { width: 18px; height: 15px; margin-right: 14px; }
.lang { width: 41px; font-size: 17px; }
.clock { width: 71px; display: flex; flex-direction: column; align-items: center; font-size: 17px; line-height: 25px; }
.tray .clock span { transform: scaleX(.8); transform-origin: 50% 50%; margin-top: -1px; }
.notif { position: relative; width: 19px; margin-left: 22px; }
.notif svg { width: 19px; height: 20px; margin-top: -5px; }
.notif b { position: absolute; left: 7px; top: 3px; width: 22px; height: 24px; border-radius: 50%; background: #303030; border: 1px solid #888; font-size: 14px; line-height: 22px; text-align: center; }
.peek { margin-left: auto; width: 6px; height: 55px; border-left: 1px solid #6d645d; }
```

FILE: stations.js
```javascript
// Station readings: pollutant key followed by x,y pairs in map units, drawn in list order.
const kinds = { r: "o3", n: "pm10", b: "nh3", y: "pm25", g: "ch4" };
const data = `
g250,82 y203,177 r307,156 n377,182 y493,184 n315,214 n465,249 b213,243 y246,274 g293,249 g304,270 y317,293 g384,273 n369,309
b428,333 y507,308 y513,308 b526,310 y577,357 r674,343 n-29,380 n259,362 g315,366 g423,375 y465,391 b100,414 b176,408 r190,403
y65,473 y345,402 r345,405 b320,424 n320,422 g380,405 r432,420 n493,433 g484,450 g594,446 g620,426 r222,452 g260,440 b350,450
b340,465 y386,443 n432,462 b258,477 r285,495 b312,483 r298,505 y346,501 y256,505 n262,505 g270,492 g278,480 n435,485 b437,510
g490,508 b405,500 n522,540 y525,530 n581,499 r580,545 n575,517 b133,525 r165,528 n222,550 r298,535 b400,515 y370,520 b383,525
n345,550 g352,600 n365,620 b380,590 n375,600 b345,615 g405,570 y350,600 b370,640 n385,650 y345,640 g400,640
b155,588 n205,600 g182,576 y215,577 g245,550 n270,580 n290,600 b360,575 y410,565 n400,580 b430,560 g435,575 n475,570 n490,590
n455,600 y480,580 b440,600 n410,620 b425,610 n450,610
r556,585 y330,600 y340,605 g380,600 b400,610 r425,600 r345,568 n100,648 n112,662 g113,700 b165,650 y180,675 y172,658 n195,620
n230,615 b245,625 g250,620 n200,675 r270,650 y268,680 r250,705 r285,690 y290,690 b232,680 y228,720 n300,630 r375,625 g310,670
g325,680 b320,690 n375,680 g380,660 b365,665 r345,680 n352,642 b400,660 g395,650 n410,690 b430,625 n440,640 n430,690 n470,640
y452,660 g452,660 y392,689 n495,640 n415,650
b535,655 g520,645 n543,655 r514,706 b574,710 n624,689 b440,720 n450,690 n290,655 b275,760 g370,700 r360,715 g385,730 y360,738
r115,798 r115,798 b165,760 g170,790 n157,783 y220,767 r240,745 r310,752 r300,755 g325,760 n335,765 b340,775 n202,822 g205,848
g198,865 b198,855 g272,808 b300,820 b290,795 y268,840 b277,850 n280,840 g318,800 n325,845 r320,850 r355,830 r370,812 r345,800
n325,845 g395,730 r410,750 r428,765 r447,742 b390,760 r400,770 y405,775 b415,820 y415,793 n500,720 n512,735 g530,745 n537,765
b480,785 g490,790 r472,785 r465,810 n465,825 n520,840 y532,811 b572,830 y556,856 r125,869 n144,869 r194,926 g225,918 y232,918
n275,917 g318,895 r320,888 b400,850 g382,873 r430,885 b471,865 r425,905 y430,914 n544,893 n515,918 n505,903 n500,900 n470,940
g340,930 b354,923 y340,947 y400,940 g385,962 n172,977 n215,975 r255,960 r262,970 r245,987 n340,970 b297,985 y313,1003
n239,1023 y284,1025 n294,1005 n303,995 r434,965 r391,995 r424,1047 b487,1012 g476,1054 b550,1058 g181,1076 g377,1085
r236,1119 n262,1108 y298,1184 b335,1174 n475,1178 r479,1151 g453,1149 r671,771 y719,771 g767,776`;

const layer = document.getElementById("stations");
for (const item of data.trim().split(/\s+/)) {
  const [x, y] = item.slice(1).split(",");
  const dot = document.createElementNS("http://www.w3.org/2000/svg", "ellipse");
  dot.setAttribute("cx", x);
  dot.setAttribute("cy", y);
  dot.setAttribute("class", kinds[item[0]]);
  layer.appendChild(dot);
}
```
